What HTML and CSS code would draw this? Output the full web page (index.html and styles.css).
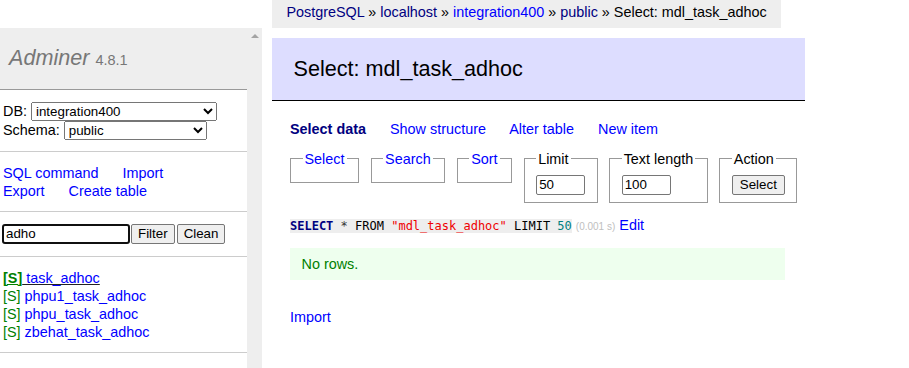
FILE: index.html
```html
<!DOCTYPE html>
<html lang="en">
<head>
<meta charset="utf-8">
<title>Select: mdl_task_adhoc - Adminer</title>
<link rel="stylesheet" href="styles.css">
</head>
<body>
<div class="page">
  <aside class="sidebar">
    <div class="menu">
      <h1 class="logo"><a class="logo-link" href="#">Adminer</a> <span class="version">4.8.1</span></h1>
      <div class="section dbs">
        <div class="row"><label class="lbl">DB:</label><select class="sel-db"><option>integration400</option></select></div>
        <div class="row"><label class="lbl">Schema:</label><select class="sel-schema"><option>public</option></select></div>
      </div>
      <div class="section menu-links">
        <div><a href="#">SQL command</a> <a href="#">Import</a></div>
        <div><a href="#">Export</a> <a href="#">Create table</a></div>
      </div>
      <div class="section filter">
        <input class="filter-input" type="text" value="adho"><button class="btn">Filter</button><button class="btn">Clean</button>
      </div>
      <ul class="section tables">
        <li class="active"><a class="sel" href="#">[S]</a><a class="tbl" href="#"> task_adhoc</a></li>
        <li><a class="sel" href="#">[S]</a> <a class="tbl" href="#">phpu1_task_adhoc</a></li>
        <li><a class="sel" href="#">[S]</a> <a class="tbl" href="#">phpu_task_adhoc</a></li>
        <li><a class="sel" href="#">[S]</a> <a class="tbl" href="#">zbehat_task_adhoc</a></li>
      </ul>
    </div>
    <div class="scrollbar"><span class="arrow"></span></div>
  </aside>

  <main class="main">
    <div class="breadcrumb"><a class="visited" href="#">PostgreSQL</a> » <a class="visited" href="#">localhost</a> » <a href="#">integration400</a> » <a class="visited" href="#">public</a> » Select: mdl_task_adhoc</div>
    <h2 class="title">Select: mdl_task_adhoc</h2>
    <div class="content">
      <p class="nav"><a class="active" href="#">Select data</a> <a href="#">Show structure</a> <a href="#">Alter table</a> <a href="#">New item</a></p>
      <form class="fields">
        <fieldset class="fs"><legend class="lg"><a href="#">Select</a></legend></fieldset>
        <fieldset class="fs"><legend class="lg"><a href="#">Search</a></legend></fieldset>
        <fieldset class="fs"><legend class="lg"><a href="#">Sort</a></legend></fieldset>
        <fieldset class="fs"><legend class="lg">Limit</legend><input class="num" type="text" value="50"></fieldset>
        <fieldset class="fs"><legend class="lg">Text length</legend><input class="num" type="text" value="100"></fieldset>
        <fieldset class="fs"><legend class="lg">Action</legend><button class="btn btn-wide" type="button">Select</button></fieldset>
      </form>
      <p class="sql"><code class="code"><span class="kw">SELECT</span> <span class="op">*</span> FROM <span class="quo">"mdl_task_adhoc"</span> LIMIT <span class="num-lit">50</span></code> <span class="time">(0.001 s)</span> <a href="#">Edit</a></p>
      <div class="message">No rows.</div>
      <p class="import"><a href="#">Import</a></p>
    </div>
  </main>
</div>
</body>
</html>
```

FILE: styles.css
```css
html, body {
  margin: 0;
  padding: 0;
  background: #fff;
}

body {
  font: 14.4px/1.25 "Liberation Sans", Arial, sans-serif;
  color: #000;
  overflow: hidden;
}

a {
  color: #00f;
  text-decoration: none;
}

a.visited {
  color: #000080;
}

.page {
  display: flex;
  align-items: flex-start;
}

/* ---------- sidebar ---------- */
.sidebar {
  display: flex;
  flex-shrink: 0;
  margin-top: 28px;
  height: 340px;
}

.menu {
  width: 247px;
}

.logo {
  margin: 0;
  height: 62px;
  box-sizing: border-box;
  background: #eee;
  border-bottom: 1px solid #999;
  padding: 16px 9px 0;
  font-size: 21.6px;
  line-height: 27px;
  font-weight: normal;
  color: #777;
  white-space: nowrap;
}

.logo-link {
  color: #777;
  font-style: italic;
}

.version {
  font-size: 14.5px;
  line-height: 1;
  color: #777;
}

.section {
  margin: 0;
  padding: 11.52px 3px;
  border-bottom: 1px solid #ccc;
}

.row {
  display: flex;
  align-items: center;
  height: 19px;
  gap: 4px;
}

select {
  font: 13.33px "Liberation Sans", Arial, sans-serif;
  height: 19px;
  color: #000;
}

.sel-db {
  width: 186px;
}

.sel-schema {
  width: 143px;
}

.menu-links {
  line-height: 18px;
}

.menu-links a {
  margin-right: 20px;
}

.filter {
  display: flex;
  align-items: center;
  padding-left: 2px;
  padding-bottom: 12.5px;
}

.filter-input {
  width: 128px;
  height: 20px;
  box-sizing: border-box;
  border: 2px solid #101010;
  border-radius: 3px;
  padding: 0 2px;
  font: 13.33px "Liberation Sans", Arial, sans-serif;
  color: #000;
  outline: none;
}

.btn {
  font: 13.33px "Liberation Sans", Arial, sans-serif;
  height: 20px;
  padding: 0 6px;
  border: 1px solid #767676;
  border-radius: 2px;
  background: #efefef;
  color: #000;
}

.btn-wide {
  padding: 0 7px;
}

.filter .btn {
  margin-left: 1px;
}

.filter .btn + .btn {
  margin-left: 2px;
}

.tables {
  list-style: none;
  line-height: 18px;
}

.tables li {
  white-space: nowrap;
}

.sel {
  color: #008000;
}

.active .sel {
  font-weight: bold;
  text-decoration: underline;
}

.active .tbl {
  text-decoration: underline;
  text-decoration-color: #222;
}

.scrollbar {
  width: 15px;
  background: #eee;
  display: flex;
  justify-content: center;
  padding-top: 6px;
  box-sizing: border-box;
}

.arrow {
  width: 0;
  height: 0;
  border-left: 4px solid transparent;
  border-right: 4px solid transparent;
  border-bottom: 4px solid #a3a3a3;
}

/* ---------- main ---------- */
.main {
  margin-left: 10px;
  width: 533px;
  flex-shrink: 0;
}

.breadcrumb {
  width: fit-content;
  height: 28px;
  line-height: 24px;
  padding: 0 14.4px;
  background: #eee;
  white-space: nowrap;
  box-sizing: border-box;
}

.title {
  margin: 10px 0 0;
  padding: 17.28px 21.6px;
  font-size: 21.6px;
  line-height: 27px;
  font-weight: normal;
  background: #ddf;
  border-bottom: 1px solid #000;
}

.content {
  margin: 0 20px 0 18px;
}

.nav {
  margin: 19px 0 0;
  line-height: 18px;
}

.nav a {
  margin-right: 20px;
}

.nav a.active {
  font-weight: bold;
  color: #000080;
}

.fields {
  display: flex;
  align-items: flex-start;
  gap: 11.5px;
  margin: 12px 0 0;
}

.fs {
  flex-shrink: 0;
  margin: 0;
  padding: 7.2px 11.52px;
  border: 1px solid #999;
  min-inline-size: auto;
}

.lg {
  padding: 0 2px;
  line-height: 18px;
  white-space: nowrap;
}

.num {
  display: block;
  width: 49px;
  height: 20px;
  box-sizing: border-box;
  border: 1px solid #767676;
  border-radius: 2px;
  padding: 0 2px;
  font: 13.33px "Liberation Sans", Arial, sans-serif;
  color: #000;
}

.fs .btn {
  display: block;
}

.sql {
  margin: 13px 0 0;
  line-height: 18px;
  white-space: nowrap;
}

.code {
  font: 12px "DejaVu Sans Mono", monospace;
  background: #eee;
  color: #000;
}

.kw {
  color: #000080;
  font-weight: bold;
}

.op {
  color: #333;
}

.quo {
  color: #e00;
}

.num-lit {
  color: #007f7f;
}

.time {
  color: silver;
  font-size: 10px;
}

.message {
  margin: 12px 0 0;
  padding: 7.2px 11.52px;
  background: #efe;
  color: #008000;
  line-height: 18px;
}

.import {
  margin: 28px 0 0;
  line-height: 18px;
}
```
